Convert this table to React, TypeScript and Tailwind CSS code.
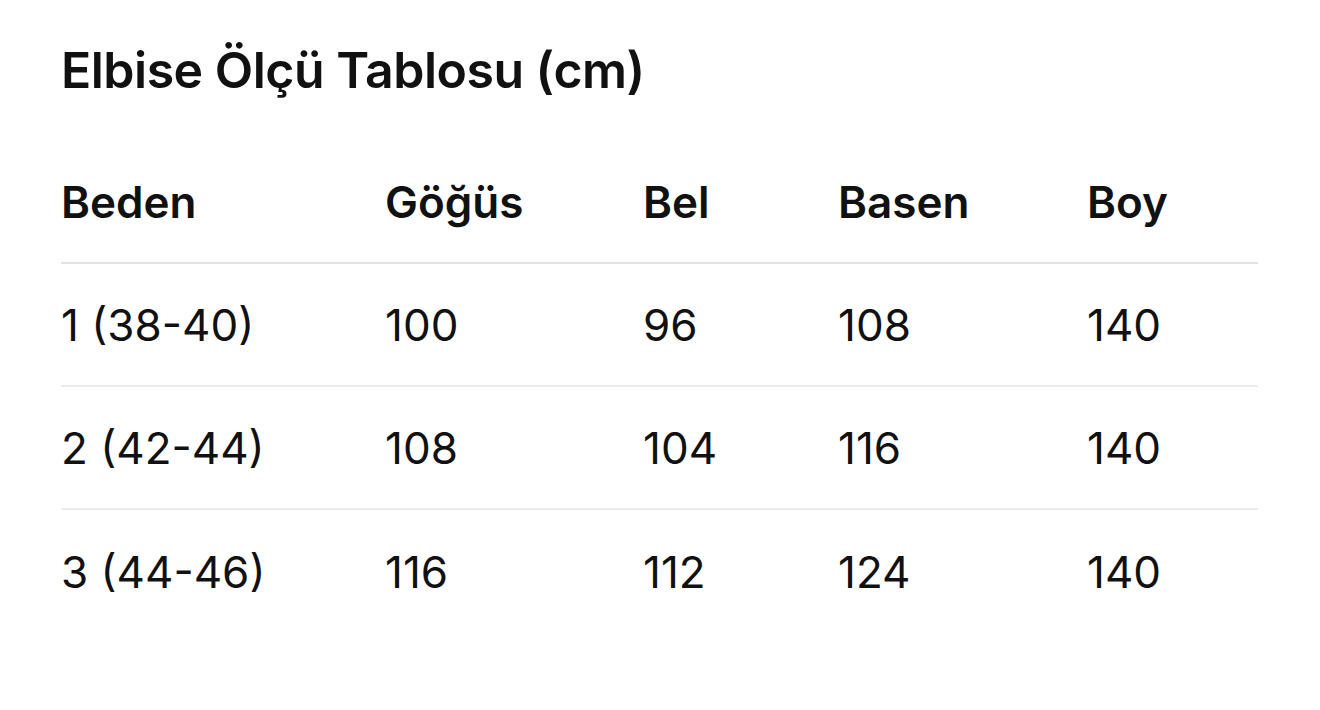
export default function App() {
  const rows = [
    ["1 (38-40)", "100", "96", "108", "140"],
    ["2 (42-44)", "108", "104", "116", "140"],
    ["3 (44-46)", "116", "112", "124", "140"],
  ];
  const headers = ["Beden", "Göğüs", "Bel", "Basen", "Boy"];
  return (
    <div className="w-[1320px] h-[710px] bg-white text-[#111111] pl-[61px] pt-[40px] font-['Inter',sans-serif]">
      <h1 className="text-[50px] leading-[60px] font-semibold tracking-[-0.5px]">Elbise Ölçü Tablosu (cm)</h1>
      <div className="w-[1197px] mt-[41px]">
        <div className="grid grid-cols-[324px_258px_195px_249px_171px] h-[123px] items-center border-b-2 border-[#e3e3e3]">
          {headers.map((h) => (
            <div key={h} className="text-[44px] font-semibold">{h}</div>
          ))}
        </div>
        {rows.map((r, i) => (
          <div
            key={i}
            className={
              i < rows.length - 1
                ? "grid grid-cols-[324px_258px_195px_249px_171px] h-[123px] items-center border-b-2 border-[#ececec]"
                : "grid grid-cols-[324px_258px_195px_249px_171px] h-[123px] items-center"
            }
          >
            {r.map((c, j) => (
              <div key={j} className="text-[44px] font-normal">{c}</div>
            ))}
          </div>
        ))}
      </div>
    </div>
  );
}
